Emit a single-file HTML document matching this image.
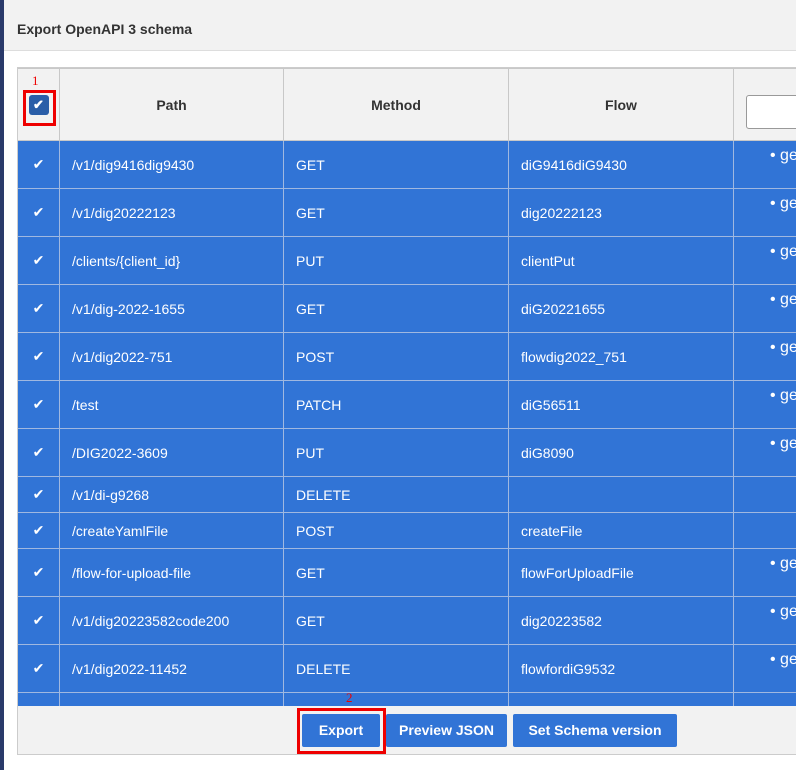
<!DOCTYPE html>
<html><head><style>
body{margin:0;width:796px;height:764px;overflow:hidden;background:#2a3a6a;font-family:"Liberation Sans",sans-serif;position:relative}
.modal{position:absolute;left:4px;top:0;width:800px;height:770px;background:#fff}
.hdr{position:absolute;left:0;top:0;width:800px;height:50px;background:#f2f2f2;border-bottom:1px solid #ddd}
.hdr span{position:absolute;left:13px;top:21px;font-size:14px;font-weight:bold;color:#333}
.tbl{position:absolute;left:17px;top:67px;width:790px;height:686px;border:1px solid #ccc;background:#f2f2f2;overflow:hidden}
table{border-collapse:collapse;position:absolute;left:-1px;top:0;table-layout:fixed;width:860px}
td,th{border:1px solid #c8c8c8;font-size:14px;text-align:left;padding:0 0 0 12px;overflow:hidden;white-space:nowrap}
th{background:#f2f2f2;color:#333;text-align:center;height:71px;padding:0}
tr.r td{background:#3174d6;color:#fff;border-color:#a0b8e0}
.ck{padding:0 !important;text-align:center !important}
td.g{vertical-align:top;padding:6px 0 0 36px;font-size:16px}
.b{position:absolute;top:714px;height:33px;background:#3174d6;color:#fff;font-weight:bold;font-size:14px;line-height:33px;text-align:center;border-radius:2px}
.red{position:absolute;border:3px solid #e00}
.num{position:absolute;color:#e00;font-size:13px;font-family:"Liberation Serif",serif}
</style></head><body>
<div class="modal">
<div class="hdr"><span>Export OpenAPI 3 schema</span></div>
</div>
<div class="tbl">
<table>
<colgroup><col style="width:42px"><col style="width:224px"><col style="width:225px"><col style="width:225px"><col style="width:144px"></colgroup>
<tr><th class="ck"><div style="width:20px;height:20px;background:#2a5ea8;border-radius:3px;margin:0 auto;color:#fff;font-size:13px;line-height:20px">✔</div></th>
<th>Path</th><th>Method</th><th>Flow</th><th style="text-align:left;padding-left:12px"><div style="width:120px;height:32px;border:1px solid #999;border-radius:3px;background:#fff;margin-top:14px"></div></th></tr>
<tr class="r" style="height:48px"><td class="ck">✔</td><td>/v1/dig9416dig9430</td><td>GET</td><td>diG9416diG9430</td><td class="g">• ge</td></tr>
<tr class="r" style="height:48px"><td class="ck">✔</td><td>/v1/dig20222123</td><td>GET</td><td>dig20222123</td><td class="g">• ge</td></tr>
<tr class="r" style="height:48px"><td class="ck">✔</td><td>/clients/{client_id}</td><td>PUT</td><td>clientPut</td><td class="g">• ge</td></tr>
<tr class="r" style="height:48px"><td class="ck">✔</td><td>/v1/dig-2022-1655</td><td>GET</td><td>diG20221655</td><td class="g">• ge</td></tr>
<tr class="r" style="height:48px"><td class="ck">✔</td><td>/v1/dig2022-751</td><td>POST</td><td>flowdig2022_751</td><td class="g">• ge</td></tr>
<tr class="r" style="height:48px"><td class="ck">✔</td><td>/test</td><td>PATCH</td><td>diG56511</td><td class="g">• ge</td></tr>
<tr class="r" style="height:48px"><td class="ck">✔</td><td>/DIG2022-3609</td><td>PUT</td><td>diG8090</td><td class="g">• ge</td></tr>
<tr class="r" style="height:36px"><td class="ck">✔</td><td>/v1/di-g9268</td><td>DELETE</td><td></td><td></td></tr>
<tr class="r" style="height:36px"><td class="ck">✔</td><td>/createYamlFile</td><td>POST</td><td>createFile</td><td></td></tr>
<tr class="r" style="height:48px"><td class="ck">✔</td><td>/flow-for-upload-file</td><td>GET</td><td>flowForUploadFile</td><td class="g">• ge</td></tr>
<tr class="r" style="height:48px"><td class="ck">✔</td><td>/v1/dig20223582code200</td><td>GET</td><td>dig20223582</td><td class="g">• ge</td></tr>
<tr class="r" style="height:48px"><td class="ck">✔</td><td>/v1/dig2022-11452</td><td>DELETE</td><td>flowfordiG9532</td><td class="g">• ge</td></tr>
<tr class="r" style="height:48px"><td class="ck"></td><td></td><td></td><td></td><td></td></tr>
</table>
<div style="position:absolute;left:0;top:638px;width:800px;height:60px;background:#f2f2f2"></div>
</div>
<div class="b" style="left:302px;width:78px">Export</div>
<div class="b" style="left:386px;width:121px">Preview JSON</div>
<div class="b" style="left:513px;width:164px">Set Schema version</div>
<div class="red" style="left:297px;top:708px;width:83px;height:40px"></div>
<div class="num" style="left:346px;top:690px">2</div>
<div class="red" style="left:23px;top:90px;width:27px;height:30px"></div>
<div class="num" style="left:32px;top:73px">1</div>
</body></html>
